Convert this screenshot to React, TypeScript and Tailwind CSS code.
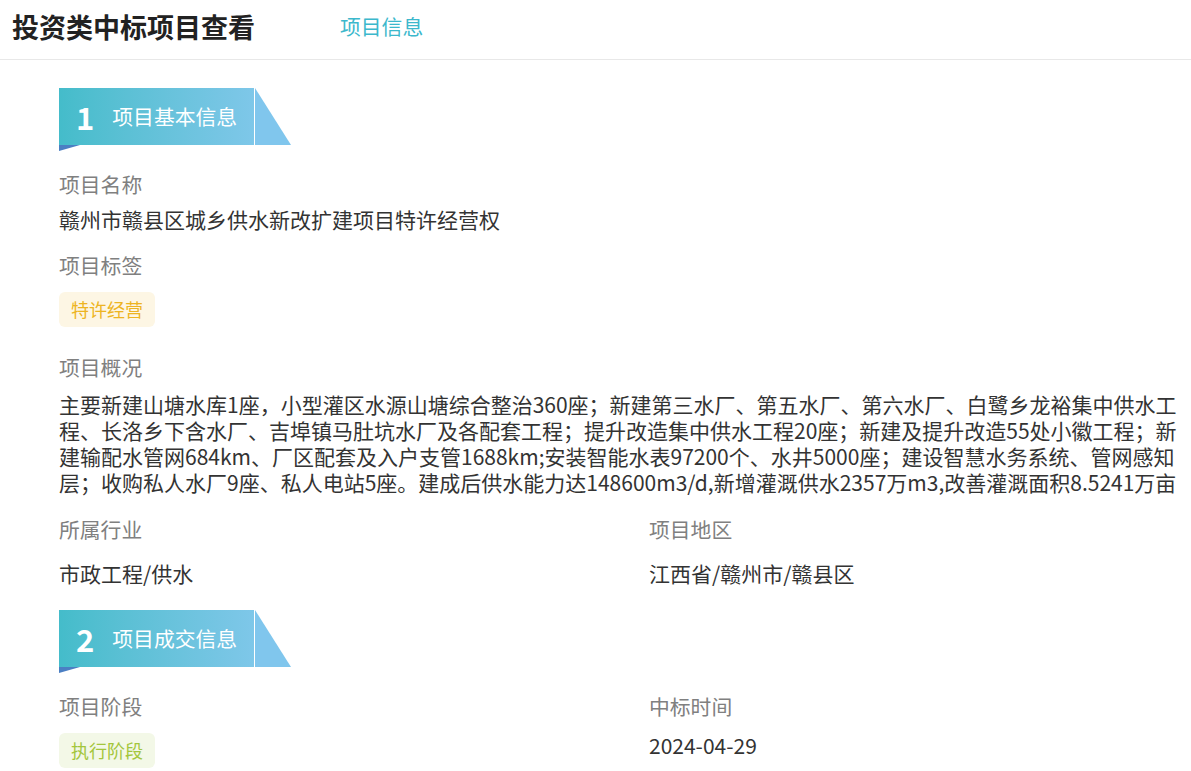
import React from 'react';

const font = { fontFamily: '"Noto Sans CJK SC", "Noto Sans", sans-serif' };

function Banner({ num, title }: { num: string; title: string }) {
  return (
    <div className="relative flex h-[57px] w-[232px]">
      <div className="flex h-full w-[195px] items-center bg-gradient-to-r from-[#44bcca] to-[#7ec7e9] pl-[17px]">
        <span className="text-[31px] font-bold leading-none text-white">{num}</span>
        <span className="ml-[18px] text-[20.8px] leading-none text-white">{title}</span>
      </div>
      <div className="h-full w-[1px] bg-white" />
      <svg className="h-full w-[36px]" viewBox="0 0 36 57" preserveAspectRatio="none">
        <polygon points="0,0 36,57 0,57" fill="#80c6ed" />
      </svg>
      <svg className="absolute left-0 top-[57px] h-[6px] w-[21px]" viewBox="0 0 21 6" preserveAspectRatio="none">
        <polygon points="0,0 21,0 0,6" fill="#4b7fc3" />
      </svg>
    </div>
  );
}

function Label({ children }: { children: React.ReactNode }) {
  return <div className="text-[20.8px] leading-[26px] text-[#808080]">{children}</div>;
}

function Value({ children }: { children: React.ReactNode }) {
  return <div className="text-[21px] leading-[26px] text-[#333333]">{children}</div>;
}

function Tag({ children, tone }: { children: React.ReactNode; tone: 'gold' | 'green' }) {
  const cls =
    tone === 'gold'
      ? 'bg-[#fdf6e4] text-[#edb422]'
      : 'bg-[#f3f8e7] text-[#a3c63c]';
  return (
    <div className={`inline-flex h-[35px] items-center rounded-[6px] px-[12px] text-[18px] ${cls}`}>
      {children}
    </div>
  );
}

export default function App() {
  return (
    <div className="h-[771px] w-[1191px] overflow-hidden bg-white" style={font}>
      <header className="flex h-[60px] items-center border-b border-[#e8e8e8] pb-[5px] pl-[12px]">
        <h1 className="text-[27px] font-bold text-[#222222]">投资类中标项目查看</h1>
        <span className="ml-[85px] text-[20.8px] text-[#3cb8cc]">项目信息</span>
      </header>

      <main className="pl-[59px]">
        <section className="mt-[28px]">
          <Banner num="1" title="项目基本信息" />
          <div className="mt-[26px]">
            <Label>项目名称</Label>
            <div className="mt-[9px]">
              <Value>赣州市赣县区城乡供水新改扩建项目特许经营权</Value>
            </div>
          </div>
          <div className="mt-[20px]">
            <Label>项目标签</Label>
            <div className="mt-[14px]">
              <Tag tone="gold">特许经营</Tag>
            </div>
          </div>
          <div className="mt-[27px]">
            <Label>项目概况</Label>
            <p className="mt-[11px] text-[21px] leading-[26px] text-[#333333]">
              主要新建山塘水库1座，小型灌区水源山塘综合整治360座；新建第三水厂、第五水厂、第六水厂、白鹭乡龙裕集中供水工程、长洛乡下含水厂、吉埠镇马肚坑水厂及各配套工程；提升改造集中供水工程20座；新建及提升改造55处小徽工程；新建输配水管网684km、厂区配套及入户支管1688km;安装智能水表97200个、水井5000座；建设智慧水务系统、管网感知层；收购私人水厂9座、私人电站5座。建成后供水能力达148600m3/d,新增灌溉供水2357万m3,改善灌溉面积8.5241万亩
            </p>
          </div>
          <div className="mt-[21px] grid grid-cols-[590px_1fr]">
            <div>
              <Label>所属行业</Label>
              <div className="mt-[18px]">
                <Value>市政工程/供水</Value>
              </div>
            </div>
            <div>
              <Label>项目地区</Label>
              <div className="mt-[18px]">
                <Value>江西省/赣州市/赣县区</Value>
              </div>
            </div>
          </div>
        </section>

        <section className="mt-[24px]">
          <Banner num="2" title="项目成交信息" />
          <div className="mt-[26px] grid grid-cols-[590px_1fr]">
            <div>
              <Label>项目阶段</Label>
              <div className="mt-[14px]">
                <Tag tone="green">执行阶段</Tag>
              </div>
            </div>
            <div>
              <Label>中标时间</Label>
              <div className="mt-[13px]">
                <Value>2024-04-29</Value>
              </div>
            </div>
          </div>
        </section>
      </main>
    </div>
  );
}
